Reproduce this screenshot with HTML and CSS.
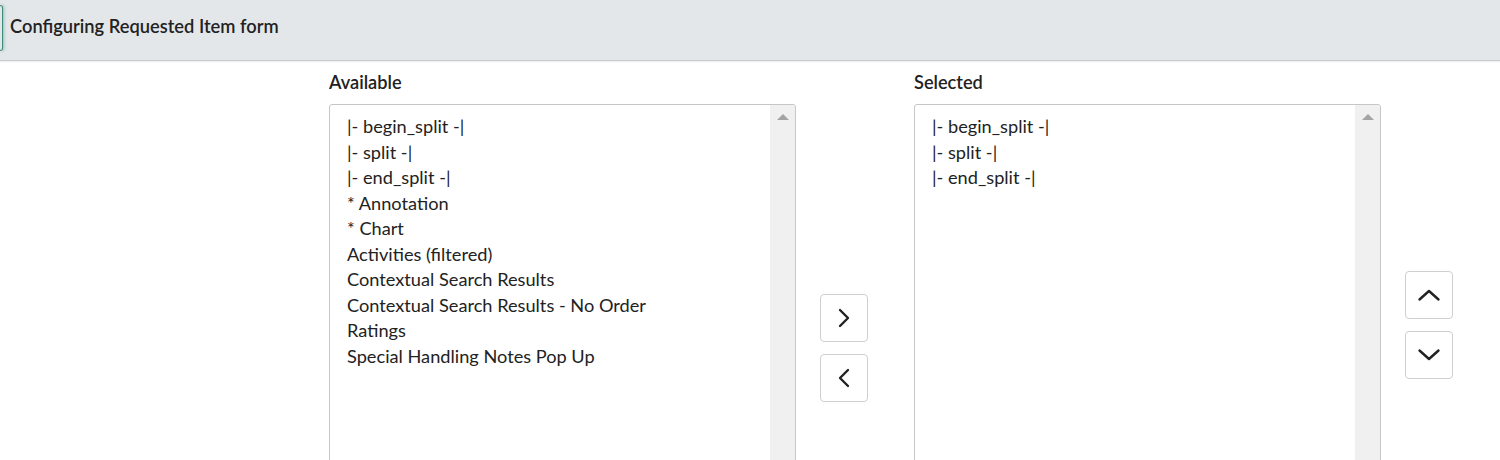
FILE: index.html
```html
<!DOCTYPE html>
<html>
<head>
<meta charset="utf-8">
<link rel="stylesheet" href="styles.css">
</head>
<body>
<div class="header">
  <div class="focus-tab"></div>
  <h1 class="title">Configuring Requested Item form</h1>
</div>
<div class="main">
  <div class="col">
    <div class="label">Available</div>
    <div class="listbox">
      <div class="options">
        <div>|- begin_split -|</div>
        <div>|- split -|</div>
        <div>|- end_split -|</div>
        <div>* Annotation</div>
        <div>* Chart</div>
        <div>Activities (filtered)</div>
        <div>Contextual Search Results</div>
        <div>Contextual Search Results - No Order</div>
        <div>Ratings</div>
        <div>Special Handling Notes Pop Up</div>
      </div>
      <div class="scrollbar"><span class="arrow-up"></span></div>
    </div>
  </div>
  <div class="mid-buttons">
    <button class="btn"><svg width="16" height="20" viewBox="0 0 16 20"><path d="M4 2 L12 10 L4 18" fill="none" stroke="#222" stroke-width="2.4" stroke-linecap="round" stroke-linejoin="round"/></svg></button>
    <button class="btn"><svg width="16" height="20" viewBox="0 0 16 20"><path d="M12 2 L4 10 L12 18" fill="none" stroke="#222" stroke-width="2.4" stroke-linecap="round" stroke-linejoin="round"/></svg></button>
  </div>
  <div class="col">
    <div class="label">Selected</div>
    <div class="listbox">
      <div class="options">
        <div>|- begin_split -|</div>
        <div>|- split -|</div>
        <div>|- end_split -|</div>
      </div>
      <div class="scrollbar"><span class="arrow-up"></span></div>
    </div>
  </div>
  <div class="side-buttons">
    <button class="btn"><svg width="24" height="14" viewBox="0 0 24 14"><path d="M2.5 11.5 L12 3 L21.5 11.5" fill="none" stroke="#222" stroke-width="2.4" stroke-linecap="round" stroke-linejoin="round"/></svg></button>
    <button class="btn"><svg width="24" height="14" viewBox="0 0 24 14"><path d="M2.5 2.5 L12 11 L21.5 2.5" fill="none" stroke="#222" stroke-width="2.4" stroke-linecap="round" stroke-linejoin="round"/></svg></button>
  </div>
</div>
</body>
</html>
```
FILE: styles.css
```css
html, body {
  margin: 0;
  padding: 0;
  background: #fff;
  font-family: "Lato", "Open Sans", "Liberation Sans", sans-serif;
  color: #222;
  overflow: hidden;
}
.header {
  height: 61px;
  background: #e4e7ea;
  border-bottom: 1px solid #c8cacc;
  box-shadow: 0 1px 1px rgba(0,0,0,0.06);
  display: flex;
  align-items: flex-start;
  padding-top: 5px;
  box-sizing: border-box;
}
.focus-tab {
  width: 2px;
  height: 44px;
  border: 1px solid #3b8e7a;
  border-left: none;
  border-radius: 0 4px 4px 0;
  box-shadow: 1px 0 3px rgba(60,150,130,0.5);
  background: #e4e7ea;
}
.title {
  margin: 9px 0 0 7px;
  font-size: 18.3px;
  line-height: 24px;
  font-weight: 600;
  color: #222;
}
.main {
  display: flex;
  align-items: flex-start;
  padding-left: 329px;
  padding-top: 10px;
}
.col {
  width: 467px;
  display: flex;
  flex-direction: column;
}
.label {
  font-size: 18.2px;
  font-weight: 600;
  height: 22px;
  line-height: 22px;
  margin-bottom: 11px;
}
.listbox {
  height: 420px;
  border: 1px solid #c6c6c6;
  border-radius: 3px;
  display: flex;
  box-sizing: border-box;
}
.options {
  flex: 1;
  padding: 9px 0 0 17px;
  font-size: 18.2px;
  line-height: 25.5px;
}
.scrollbar {
  width: 25px;
  background: #f0f0f0;
  border-radius: 0 3px 0 0;
  display: flex;
  justify-content: center;
  padding-top: 9px;
  box-sizing: border-box;
}
.arrow-up {
  width: 0;
  height: 0;
  border-left: 6px solid transparent;
  border-right: 6px solid transparent;
  border-bottom: 6px solid #a3a3a3;
}
.btn {
  width: 48px;
  height: 48px;
  padding: 0;
  background: #fff;
  border: 1px solid #cfcfcf;
  border-radius: 4px;
  display: flex;
  align-items: center;
  justify-content: center;
  box-sizing: border-box;
}
.mid-buttons {
  display: flex;
  flex-direction: column;
  gap: 12px;
  margin: 223px 46px 0 24px;
}
.side-buttons {
  display: flex;
  flex-direction: column;
  gap: 12px;
  margin: 200px 0 0 24px;
}
```
